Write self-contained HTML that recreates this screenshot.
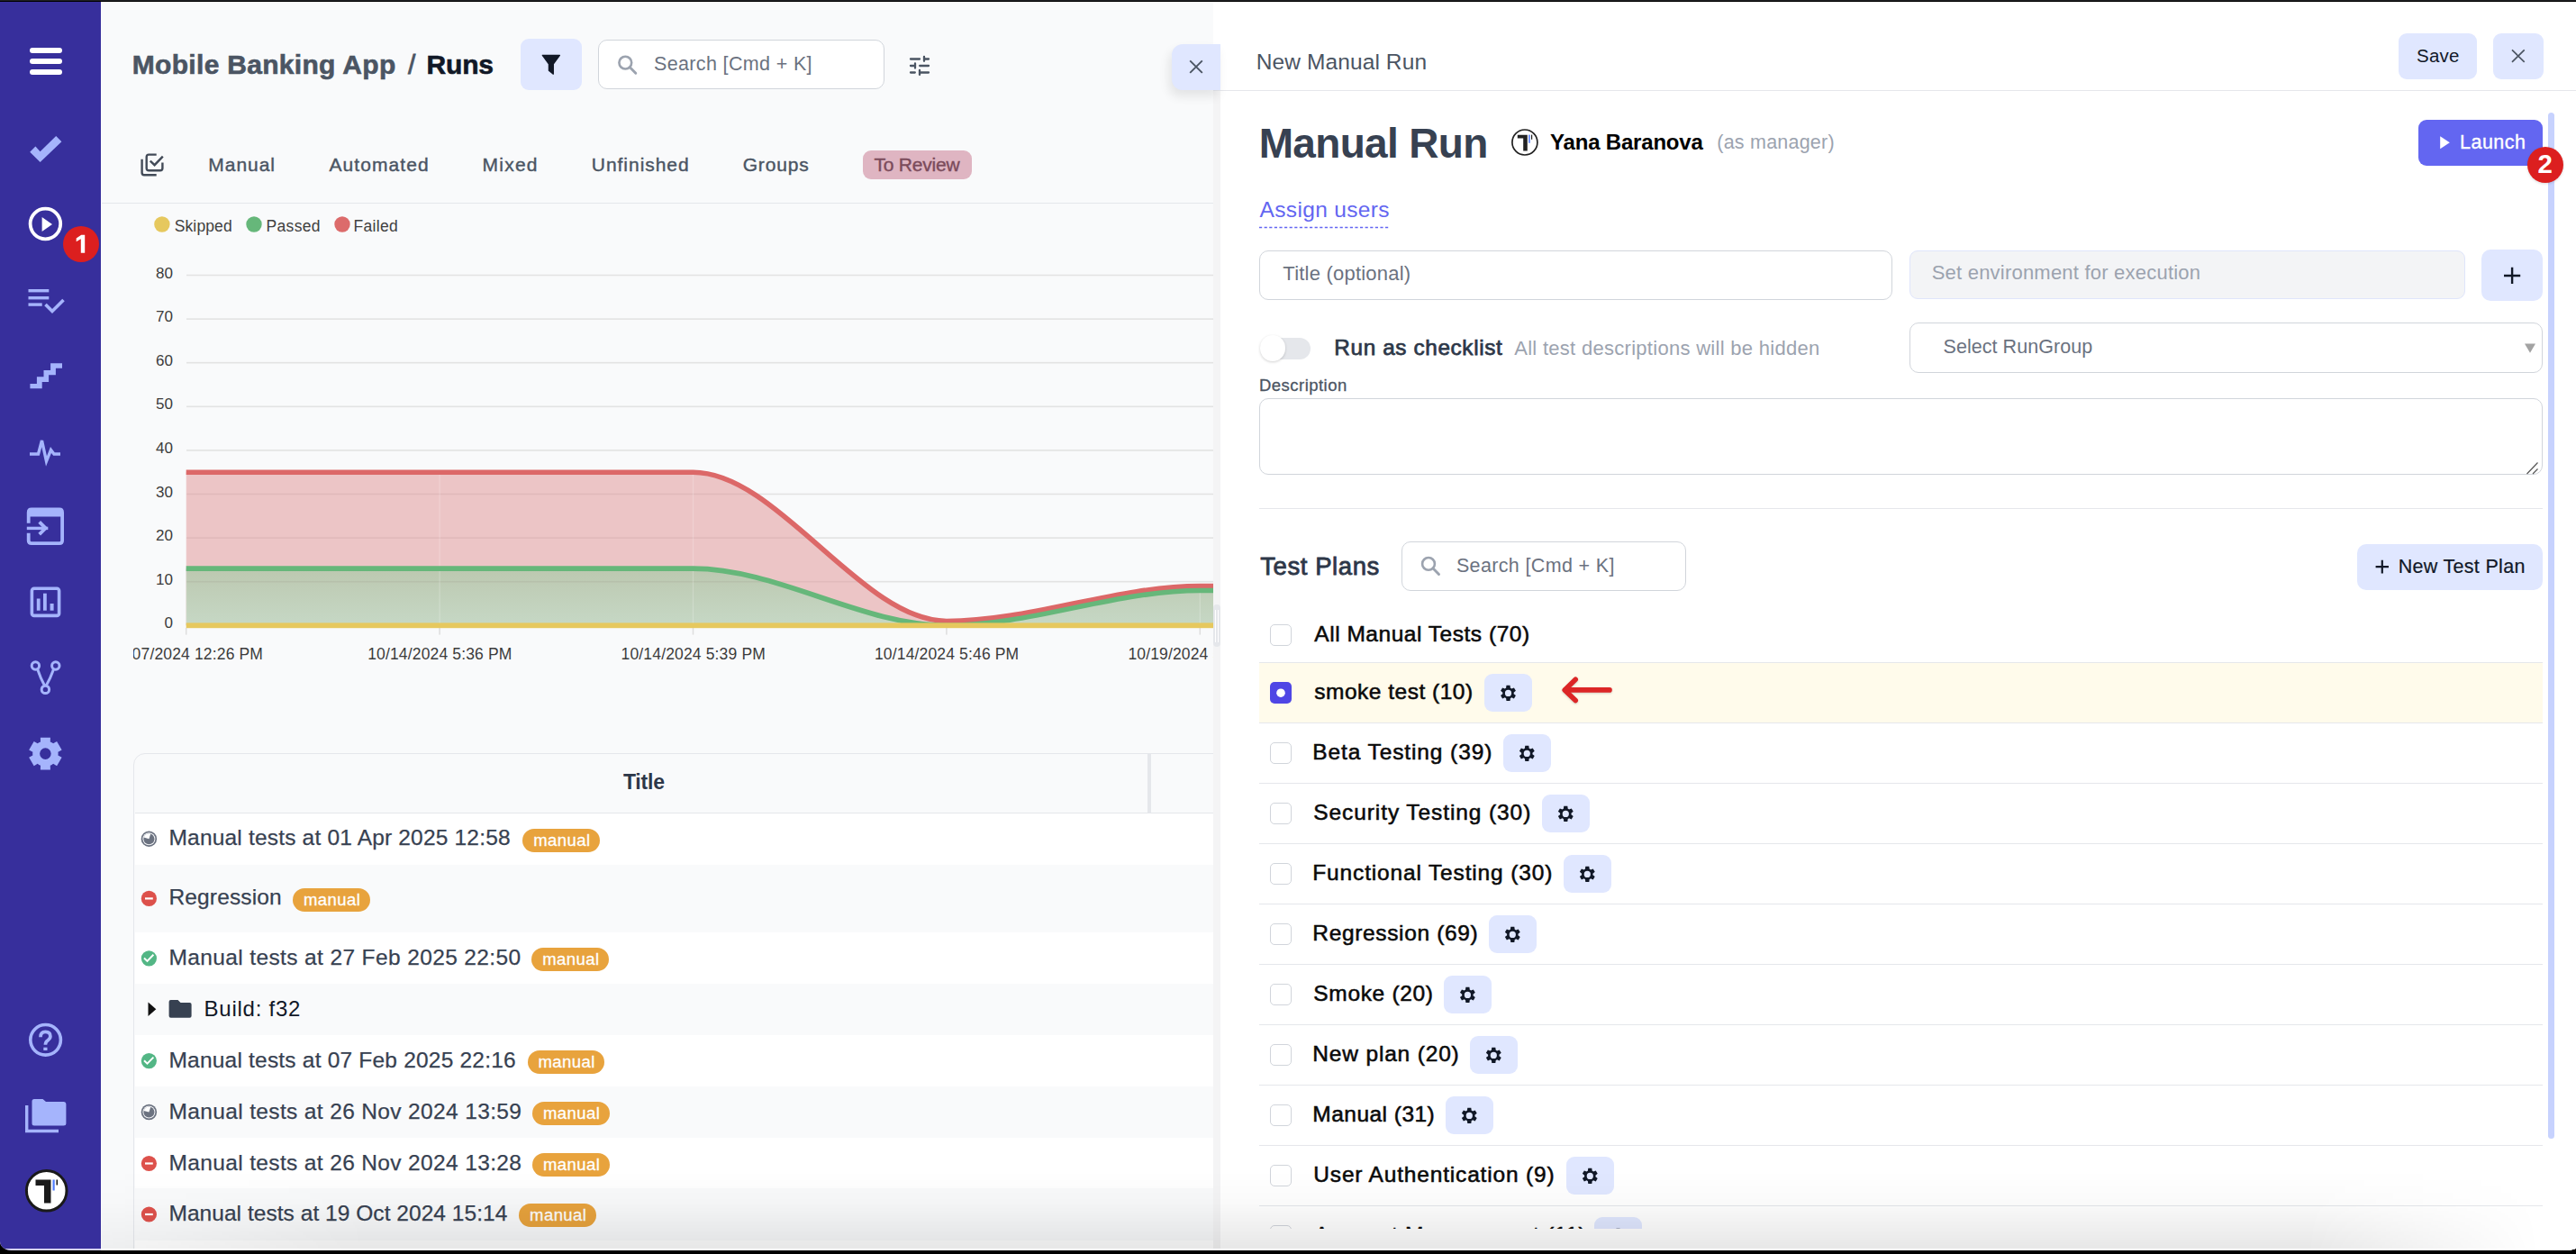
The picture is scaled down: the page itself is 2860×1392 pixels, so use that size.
<!DOCTYPE html><html><head><meta charset="utf-8"><style>
html,body{margin:0;padding:0;}
body{width:2860px;height:1392px;overflow:hidden;background:#000;position:relative;font-family:"Liberation Sans",sans-serif;}
.t{position:absolute;line-height:1;white-space:nowrap;}
#win{position:absolute;left:0;top:2px;width:2860px;height:1386px;overflow:hidden;border-radius:0 0 12px 12px / 0 0 3px 10px;background:#f9fafb;}
#root{position:absolute;left:0;top:-2px;width:2860px;height:1392px;}
#main{position:absolute;left:0;top:0;width:1347px;height:1392px;overflow:hidden;}
#panel{position:absolute;left:1347px;top:0;width:1513px;height:1392px;overflow:hidden;background:#fff;}
#pin{position:absolute;left:-1347px;top:0;width:2860px;height:1392px;}
</style></head><body><div id="win"><div id="root">
<div style="position:absolute;left:112.00px;top:2.00px;width:1235.00px;height:1.00px;box-sizing:border-box;background:#fff;"></div>
<div id="main">
<div class="t" style="left:146.80px;top:56.61px;font-size:30px;color:#4b5563;font-weight:700;letter-spacing:0.306px;-webkit-text-stroke:0.60px #4b5563;">Mobile Banking App</div>
<div class="t" style="left:453.00px;top:56.61px;font-size:30px;color:#4b5563;font-weight:400;letter-spacing:0.000px;-webkit-text-stroke:0.80px #4b5563;">/</div>
<div class="t" style="left:473.50px;top:56.61px;font-size:30px;color:#111827;font-weight:700;letter-spacing:-0.172px;-webkit-text-stroke:0.60px #111827;">Runs</div>
<div style="position:absolute;left:578.00px;top:43.00px;width:68.00px;height:56.50px;box-sizing:border-box;background:#e0e7ff;border-radius:9px;"></div>
<svg style="position:absolute;left:0;top:0;overflow:visible" width="2860" height="1392" viewBox="0 0 2860 1392"><path d="M602.3,61.3 H621.4 L614.3,71 V82.2 L609.4,78.3 V71 Z" fill="#111827" stroke="#111827" stroke-width="1.3" stroke-linejoin="round"/></svg>
<div style="position:absolute;left:664.00px;top:44.20px;width:317.60px;height:55.10px;box-sizing:border-box;background:#fff;border:1.5px solid #d1d5db;border-radius:10px;"></div>
<svg style="position:absolute;left:0;top:0;overflow:visible" width="2860" height="1392" viewBox="0 0 2860 1392"><circle cx="694.3" cy="69.6" r="6.9" fill="none" stroke="#9ca3af" stroke-width="2.6"/><line x1="699.4" y1="74.7" x2="705.8" y2="81.2" stroke="#9ca3af" stroke-width="2.9" stroke-linecap="round"/></svg>
<div class="t" style="left:726.00px;top:60.80px;font-size:21.5px;color:#6b7280;font-weight:400;letter-spacing:0.353px;">Search [Cmd + K]</div>
<svg style="position:absolute;left:0;top:0;overflow:visible" width="2860" height="1392" viewBox="0 0 2860 1392"><g stroke="#4b5563" stroke-width="2.3" stroke-linecap="round" fill="none"><path d="M1011,65.5 H1021 M1027.2,65.5 H1031 M1026,63 V67.8 M1011,73 H1014.2 M1021.2,73 H1031 M1016,70.4 V75.6 M1011,80.5 H1015.8 M1022.8,80.5 H1031 M1021,78 V82.9"/></g></svg>
<svg style="position:absolute;left:0;top:0;overflow:visible" width="2860" height="1392" viewBox="0 0 2860 1392"><g fill="none" stroke="#434b58" stroke-width="2.4"><path d="M157.6,176.7 V191.8 Q157.6,194.2 160,194.2 H173.7"/><path d="M173.7,171.6 H165.2 Q162.7,171.6 162.7,174.2 V186.7 Q162.7,189.2 165.2,189.2 H177.9 Q180.4,189.2 180.4,186.7 V180.4"/><path d="M166.8,178.6 L171.6,183.2 L180.8,173.6"/></g></svg>
<div class="t" style="left:231.30px;top:172.22px;font-size:21px;color:#4b5563;font-weight:400;letter-spacing:0.958px;-webkit-text-stroke:0.40px #4b5563;">Manual</div>
<div class="t" style="left:365.40px;top:172.22px;font-size:21px;color:#4b5563;font-weight:400;letter-spacing:1.102px;-webkit-text-stroke:0.40px #4b5563;">Automated</div>
<div class="t" style="left:535.60px;top:172.22px;font-size:21px;color:#4b5563;font-weight:400;letter-spacing:1.216px;-webkit-text-stroke:0.40px #4b5563;">Mixed</div>
<div class="t" style="left:656.80px;top:172.22px;font-size:21px;color:#4b5563;font-weight:400;letter-spacing:0.961px;-webkit-text-stroke:0.40px #4b5563;">Unfinished</div>
<div class="t" style="left:824.70px;top:172.22px;font-size:21px;color:#4b5563;font-weight:400;letter-spacing:0.827px;-webkit-text-stroke:0.40px #4b5563;">Groups</div>
<div style="position:absolute;left:958.00px;top:167.20px;width:121.00px;height:31.40px;box-sizing:border-box;background:#dfb5c2;border-radius:9px;"></div>
<div class="t" style="left:970.40px;top:172.22px;font-size:21px;color:#7b4b5b;font-weight:400;letter-spacing:-0.213px;-webkit-text-stroke:0.40px #7b4b5b;">To Review</div>
<div style="position:absolute;left:112.00px;top:224.60px;width:1235.00px;height:1.50px;box-sizing:border-box;background:#e5e7eb;"></div>
<svg style="position:absolute;left:0;top:0;overflow:visible" width="2860" height="1392" viewBox="0 0 2860 1392"><defs><clipPath id="cc"><rect x="148" y="230" width="1199" height="520"/></clipPath><linearGradient id="gg" x1="0" y1="631" x2="0" y2="694" gradientUnits="userSpaceOnUse"><stop offset="0" stop-color="#bcc8b0"/><stop offset="1" stop-color="#c6d8c5"/></linearGradient></defs><circle cx="179.9" cy="249" r="8.7" fill="#e6c85e"/><circle cx="282" cy="249" r="8.7" fill="#66b77a"/><circle cx="380" cy="249" r="8.7" fill="#dc6b6b"/><rect x="207" y="304.7" width="1140" height="1.6" fill="#e3e3e3"/><rect x="207" y="353.3" width="1140" height="1.6" fill="#e3e3e3"/><rect x="207" y="401.9" width="1140" height="1.6" fill="#e3e3e3"/><rect x="207" y="450.5" width="1140" height="1.6" fill="#e3e3e3"/><rect x="207" y="499.1" width="1140" height="1.6" fill="#e3e3e3"/><rect x="207" y="547.7" width="1140" height="1.6" fill="#e3e3e3"/><rect x="207" y="596.3" width="1140" height="1.6" fill="#e3e3e3"/><rect x="207" y="644.9" width="1140" height="1.6" fill="#e3e3e3"/><rect x="207" y="693.5" width="1140" height="1.6" fill="#e3e3e3"/><rect x="205.95" y="697" width="1.5" height="7.6" fill="#dedede"/><rect x="487.35" y="697" width="1.5" height="7.6" fill="#dedede"/><rect x="768.75" y="697" width="1.5" height="7.6" fill="#dedede"/><rect x="1050.15" y="697" width="1.5" height="7.6" fill="#dedede"/><rect x="1331.55" y="697" width="1.5" height="7.6" fill="#dedede"/><g clip-path="url(#cc)"><path d="M206.70,524.27 C300.50,524.27 394.30,524.27 488.10,524.27 C581.90,524.27 675.70,524.27 769.50,524.27 C863.30,524.27 957.10,689.44 1050.90,689.44 C1144.70,689.44 1238.50,650.58 1332.30,650.58 C1426.10,650.58 1519.90,650.58 1613.70,650.58 L1613.7,694.3 L206.7,694.3 Z" fill="#ecc5c6"/><path d="M206.70,631.15 C300.50,631.15 394.30,631.15 488.10,631.15 C581.90,631.15 675.70,631.15 769.50,631.15 C863.30,631.15 957.10,694.30 1050.90,694.30 C1144.70,694.30 1238.50,655.44 1332.30,655.44 C1426.10,655.44 1519.90,655.44 1613.70,655.44 L1613.7,694.3 L206.7,694.3 Z" fill="url(#gg)"/><clipPath id="fc"><path d="M206.70,524.27 C300.50,524.27 394.30,524.27 488.10,524.27 C581.90,524.27 675.70,524.27 769.50,524.27 C863.30,524.27 957.10,689.44 1050.90,689.44 C1144.70,689.44 1238.50,650.58 1332.30,650.58 C1426.10,650.58 1519.90,650.58 1613.70,650.58 L1613.7,694.3 L206.7,694.3 Z"/></clipPath><g clip-path="url(#fc)"><rect x="207" y="304.7" width="1140" height="1.6" fill="rgba(90,40,40,0.07)"/><rect x="207" y="353.3" width="1140" height="1.6" fill="rgba(90,40,40,0.07)"/><rect x="207" y="401.9" width="1140" height="1.6" fill="rgba(90,40,40,0.07)"/><rect x="207" y="450.5" width="1140" height="1.6" fill="rgba(90,40,40,0.07)"/><rect x="207" y="499.1" width="1140" height="1.6" fill="rgba(90,40,40,0.07)"/><rect x="207" y="547.7" width="1140" height="1.6" fill="rgba(90,40,40,0.07)"/><rect x="207" y="596.3" width="1140" height="1.6" fill="rgba(90,40,40,0.07)"/><rect x="207" y="644.9" width="1140" height="1.6" fill="rgba(90,40,40,0.07)"/><rect x="207" y="693.5" width="1140" height="1.6" fill="rgba(90,40,40,0.07)"/><rect x="206.10" y="300" width="1.2" height="394" fill="rgba(255,255,255,0.22)"/><rect x="487.50" y="300" width="1.2" height="394" fill="rgba(255,255,255,0.22)"/><rect x="768.90" y="300" width="1.2" height="394" fill="rgba(255,255,255,0.22)"/><rect x="1050.30" y="300" width="1.2" height="394" fill="rgba(255,255,255,0.22)"/><rect x="1331.70" y="300" width="1.2" height="394" fill="rgba(255,255,255,0.22)"/></g><path d="M206.70,524.27 C300.50,524.27 394.30,524.27 488.10,524.27 C581.90,524.27 675.70,524.27 769.50,524.27 C863.30,524.27 957.10,689.44 1050.90,689.44 C1144.70,689.44 1238.50,650.58 1332.30,650.58 C1426.10,650.58 1519.90,650.58 1613.70,650.58" fill="none" stroke="#dc6868" stroke-width="5.6"/><path d="M206.70,631.15 C300.50,631.15 394.30,631.15 488.10,631.15 C581.90,631.15 675.70,631.15 769.50,631.15 C863.30,631.15 957.10,694.30 1050.90,694.30 C1144.70,694.30 1238.50,655.44 1332.30,655.44 C1426.10,655.44 1519.90,655.44 1613.70,655.44" fill="none" stroke="#66b77a" stroke-width="5.6"/><rect x="206.7" y="691.40" width="1200" height="5.8" fill="#e6c85e"/></g></svg>
<div class="t" style="left:193.70px;top:243.39px;font-size:17.5px;color:#404040;font-weight:400;letter-spacing:0.132px;">Skipped</div>
<div class="t" style="left:295.50px;top:243.39px;font-size:17.5px;color:#404040;font-weight:400;letter-spacing:0.332px;">Passed</div>
<div class="t" style="left:392.60px;top:243.39px;font-size:17.5px;color:#404040;font-weight:400;letter-spacing:0.294px;">Failed</div>
<div class="t" style="left:172.95px;top:294.61px;font-size:17px;color:#3c3c3c;font-weight:400;letter-spacing:0.000px;">80</div>
<div class="t" style="left:172.95px;top:343.21px;font-size:17px;color:#3c3c3c;font-weight:400;letter-spacing:0.000px;">70</div>
<div class="t" style="left:172.95px;top:391.81px;font-size:17px;color:#3c3c3c;font-weight:400;letter-spacing:0.000px;">60</div>
<div class="t" style="left:172.95px;top:440.41px;font-size:17px;color:#3c3c3c;font-weight:400;letter-spacing:0.000px;">50</div>
<div class="t" style="left:172.95px;top:489.01px;font-size:17px;color:#3c3c3c;font-weight:400;letter-spacing:0.000px;">40</div>
<div class="t" style="left:172.95px;top:537.61px;font-size:17px;color:#3c3c3c;font-weight:400;letter-spacing:0.000px;">30</div>
<div class="t" style="left:172.95px;top:586.21px;font-size:17px;color:#3c3c3c;font-weight:400;letter-spacing:0.000px;">20</div>
<div class="t" style="left:172.95px;top:634.81px;font-size:17px;color:#3c3c3c;font-weight:400;letter-spacing:0.000px;">10</div>
<div class="t" style="left:182.40px;top:683.41px;font-size:17px;color:#3c3c3c;font-weight:400;letter-spacing:0.000px;">0</div>
<div style="position:absolute;left:148px;top:700px;width:1199px;height:50px;overflow:hidden;">
<div style="position:absolute;left:-148px;top:-700px;width:1400px;height:800px;">
<div class="t" style="left:121.84px;top:717.79px;font-size:17.5px;color:#3c3c3c;font-weight:400;letter-spacing:0.153px;">10/07/2024 12:26 PM</div>
<div class="t" style="left:408.18px;top:717.79px;font-size:17.5px;color:#3c3c3c;font-weight:400;letter-spacing:0.153px;">10/14/2024 5:36 PM</div>
<div class="t" style="left:689.58px;top:717.79px;font-size:17.5px;color:#3c3c3c;font-weight:400;letter-spacing:0.153px;">10/14/2024 5:39 PM</div>
<div class="t" style="left:970.98px;top:717.79px;font-size:17.5px;color:#3c3c3c;font-weight:400;letter-spacing:0.153px;">10/14/2024 5:46 PM</div>
<div class="t" style="left:1252.38px;top:717.79px;font-size:17.5px;color:#3c3c3c;font-weight:400;letter-spacing:0.153px;">10/19/2024 5:25 PM</div>
</div></div>
<div style="position:absolute;left:148.40px;top:835.60px;width:1271.60px;height:664.40px;box-sizing:border-box;border:1.5px solid #e5e7eb;border-radius:13px 0 0 0;background:#f9fafb;"></div>
<div style="position:absolute;left:1273.70px;top:836.50px;width:4.80px;height:65.50px;box-sizing:border-box;background:#e5e7eb;"></div>
<div class="t" style="left:691.90px;top:857.13px;font-size:23px;color:#2d3748;font-weight:700;letter-spacing:-0.193px;">Title</div>
<div style="position:absolute;left:150.00px;top:903.00px;width:1197.00px;height:57.00px;box-sizing:border-box;background:#ffffff;"></div>
<div style="position:absolute;left:150.00px;top:960.00px;width:1197.00px;height:75.00px;box-sizing:border-box;background:#f9fafb;"></div>
<div style="position:absolute;left:150.00px;top:1035.00px;width:1197.00px;height:56.60px;box-sizing:border-box;background:#ffffff;"></div>
<div style="position:absolute;left:150.00px;top:1091.60px;width:1197.00px;height:57.40px;box-sizing:border-box;background:#f9fafb;"></div>
<div style="position:absolute;left:150.00px;top:1149.00px;width:1197.00px;height:56.70px;box-sizing:border-box;background:#ffffff;"></div>
<div style="position:absolute;left:150.00px;top:1205.70px;width:1197.00px;height:56.90px;box-sizing:border-box;background:#f9fafb;"></div>
<div style="position:absolute;left:150.00px;top:1262.60px;width:1197.00px;height:56.90px;box-sizing:border-box;background:#ffffff;"></div>
<div style="position:absolute;left:150.00px;top:1319.50px;width:1197.00px;height:57.20px;box-sizing:border-box;background:#f9fafb;"></div>
<div style="position:absolute;left:150.00px;top:1376.70px;width:1197.00px;height:57.30px;box-sizing:border-box;background:#ffffff;"></div>
<div style="position:absolute;left:149.90px;top:901.50px;width:1197.10px;height:1.00px;box-sizing:border-box;background:#e5e7eb;"></div>
<svg style="position:absolute;left:0;top:0;overflow:visible" width="2860" height="1392" viewBox="0 0 2860 1392"><circle cx="165.4" cy="931.2" r="8.7" fill="#6b7280"/><circle cx="165.4" cy="931.2" r="7.0" fill="#f3f4f6"/><circle cx="165.4" cy="931.2" r="6.0" fill="#6b7280"/><path d="M165.4,931.2 L159.6,929.6 A6,6 0 0 1 167.3,925.5 Z" fill="#fff"/><circle cx="165.4" cy="997.4" r="8.6" fill="#dd514b"/><rect x="161.0" y="996.3" width="8.8" height="2.2" fill="#fff"/><circle cx="165.4" cy="1063.8" r="8.6" fill="#53b685"/><path d="M160.0,1063.5 L163.5,1066.8999999999999 L170.4,1059.8" fill="none" stroke="#fff" stroke-width="2"/><circle cx="165.4" cy="1177.6" r="8.6" fill="#53b685"/><path d="M160.0,1177.3 L163.5,1180.6999999999998 L170.4,1173.6" fill="none" stroke="#fff" stroke-width="2"/><circle cx="165.4" cy="1234.5" r="8.7" fill="#6b7280"/><circle cx="165.4" cy="1234.5" r="7.0" fill="#f3f4f6"/><circle cx="165.4" cy="1234.5" r="6.0" fill="#6b7280"/><path d="M165.4,1234.5 L159.6,1232.9 A6,6 0 0 1 167.3,1228.8 Z" fill="#fff"/><circle cx="165.4" cy="1291.5" r="8.6" fill="#dd514b"/><rect x="161.0" y="1290.4" width="8.8" height="2.2" fill="#fff"/><circle cx="165.4" cy="1348" r="8.6" fill="#dd514b"/><rect x="161.0" y="1346.9" width="8.8" height="2.2" fill="#fff"/></svg>
<div class="t" style="left:187.50px;top:918.26px;font-size:24.5px;color:#374151;font-weight:400;letter-spacing:0.183px;-webkit-text-stroke:0.25px #374151;">Manual tests at 01 Apr 2025 12:58</div>
<div style="position:absolute;left:580.00px;top:919.50px;width:86.00px;height:26.20px;box-sizing:border-box;background:#e8a33d;border-radius:13px;"></div>
<div class="t" style="left:592.20px;top:923.54px;font-size:18.5px;color:#ffffff;font-weight:400;letter-spacing:0.427px;-webkit-text-stroke:0.30px #ffffff;">manual</div>
<div class="t" style="left:187.50px;top:984.46px;font-size:24.5px;color:#374151;font-weight:400;letter-spacing:0.134px;-webkit-text-stroke:0.25px #374151;">Regression</div>
<div style="position:absolute;left:324.80px;top:985.70px;width:85.90px;height:26.20px;box-sizing:border-box;background:#e8a33d;border-radius:13px;"></div>
<div class="t" style="left:336.95px;top:989.74px;font-size:18.5px;color:#ffffff;font-weight:400;letter-spacing:0.427px;-webkit-text-stroke:0.30px #ffffff;">manual</div>
<div class="t" style="left:187.50px;top:1050.86px;font-size:24.5px;color:#374151;font-weight:400;letter-spacing:0.374px;-webkit-text-stroke:0.25px #374151;">Manual tests at 27 Feb 2025 22:50</div>
<div style="position:absolute;left:590.30px;top:1052.10px;width:85.50px;height:26.20px;box-sizing:border-box;background:#e8a33d;border-radius:13px;"></div>
<div class="t" style="left:602.25px;top:1056.14px;font-size:18.5px;color:#ffffff;font-weight:400;letter-spacing:0.427px;-webkit-text-stroke:0.30px #ffffff;">manual</div>
<div class="t" style="left:187.50px;top:1164.66px;font-size:24.5px;color:#374151;font-weight:400;letter-spacing:0.202px;-webkit-text-stroke:0.25px #374151;">Manual tests at 07 Feb 2025 22:16</div>
<div style="position:absolute;left:586.00px;top:1165.90px;width:84.50px;height:26.20px;box-sizing:border-box;background:#e8a33d;border-radius:13px;"></div>
<div class="t" style="left:597.45px;top:1169.94px;font-size:18.5px;color:#ffffff;font-weight:400;letter-spacing:0.427px;-webkit-text-stroke:0.30px #ffffff;">manual</div>
<div class="t" style="left:187.50px;top:1221.56px;font-size:24.5px;color:#374151;font-weight:400;letter-spacing:0.357px;-webkit-text-stroke:0.25px #374151;">Manual tests at 26 Nov 2024 13:59</div>
<div style="position:absolute;left:590.80px;top:1222.80px;width:86.00px;height:26.20px;box-sizing:border-box;background:#e8a33d;border-radius:13px;"></div>
<div class="t" style="left:603.00px;top:1226.84px;font-size:18.5px;color:#ffffff;font-weight:400;letter-spacing:0.427px;-webkit-text-stroke:0.30px #ffffff;">manual</div>
<div class="t" style="left:187.50px;top:1278.56px;font-size:24.5px;color:#374151;font-weight:400;letter-spacing:0.357px;-webkit-text-stroke:0.25px #374151;">Manual tests at 26 Nov 2024 13:28</div>
<div style="position:absolute;left:590.80px;top:1279.80px;width:86.00px;height:26.20px;box-sizing:border-box;background:#e8a33d;border-radius:13px;"></div>
<div class="t" style="left:603.00px;top:1283.84px;font-size:18.5px;color:#ffffff;font-weight:400;letter-spacing:0.427px;-webkit-text-stroke:0.30px #ffffff;">manual</div>
<div class="t" style="left:187.50px;top:1335.06px;font-size:24.5px;color:#374151;font-weight:400;letter-spacing:0.040px;-webkit-text-stroke:0.25px #374151;">Manual tests at 19 Oct 2024 15:14</div>
<div style="position:absolute;left:576.00px;top:1336.30px;width:85.80px;height:26.20px;box-sizing:border-box;background:#e8a33d;border-radius:13px;"></div>
<div class="t" style="left:588.10px;top:1340.34px;font-size:18.5px;color:#ffffff;font-weight:400;letter-spacing:0.427px;-webkit-text-stroke:0.30px #ffffff;">manual</div>
<svg style="position:absolute;left:0;top:0;overflow:visible" width="2860" height="1392" viewBox="0 0 2860 1392"><path d="M164.5,1112.5 L173.3,1120.2 L164.5,1128 Z" fill="#111"/><path d="M187.6,1112 Q187.6,1110 189.6,1110 H197.5 L200.5,1113 H210.6 Q212.6,1113 212.6,1115 V1127.7 Q212.6,1129.7 210.6,1129.7 H189.6 Q187.6,1129.7 187.6,1127.7 Z" fill="#374151"/></svg>
<div class="t" style="left:226.60px;top:1107.68px;font-size:24px;color:#111827;font-weight:400;letter-spacing:0.742px;">Build: f32</div>
</div>
<div id="panel"><div id="pin">
<div style="position:absolute;left:1355.00px;top:0.00px;width:1505.00px;height:1392.00px;box-sizing:border-box;background:#fff;"></div>
<div class="t" style="left:1394.70px;top:57.46px;font-size:24.5px;color:#4b5563;font-weight:400;letter-spacing:0.108px;">New Manual Run</div>
<div style="position:absolute;left:2663.00px;top:37.00px;width:87.00px;height:51.00px;box-sizing:border-box;background:#e0e7ff;border-radius:9px;"></div>
<div class="t" style="left:2683.00px;top:52.45px;font-size:20.5px;color:#111827;font-weight:400;letter-spacing:0.225px;">Save</div>
<div style="position:absolute;left:2768.00px;top:37.00px;width:56.00px;height:51.00px;box-sizing:border-box;background:#e0e7ff;border-radius:9px;"></div>
<svg style="position:absolute;left:0;top:0;overflow:visible" width="2860" height="1392" viewBox="0 0 2860 1392"><path d="M2789,55.4 L2802.7,68.9 M2802.7,55.4 L2789,68.9" stroke="#4b5563" stroke-width="1.7"/></svg>
<div style="position:absolute;left:1347.00px;top:99.60px;width:1513.00px;height:1.40px;box-sizing:border-box;background:#e5e7eb;"></div>
<div class="t" style="left:1397.70px;top:136.16px;font-size:46px;color:#374151;font-weight:700;letter-spacing:-0.673px;">Manual Run</div>
<svg style="position:absolute;left:0;top:0;overflow:visible" width="2860" height="1392" viewBox="0 0 2860 1392"><circle cx="1692.9" cy="158" r="14" fill="#fff" stroke="#222" stroke-width="1.7"/><path d="M1684.8,149.8 H1695.8 V167.6 H1691.2 V153.6 H1684.8 Z" fill="#222"/><rect x="1697.1" y="149.6" width="1.7" height="9.2" fill="#5f86ff"/><rect x="1700" y="149.6" width="1.2" height="5.2" fill="#222"/></svg>
<div class="t" style="left:1721.00px;top:145.78px;font-size:24px;color:#000000;font-weight:700;letter-spacing:-0.187px;">Yana Baranova</div>
<div class="t" style="left:1906.30px;top:147.90px;font-size:21.5px;color:#9ca3af;font-weight:400;letter-spacing:0.219px;">(as manager)</div>
<div style="position:absolute;left:2685.00px;top:133.00px;width:138.00px;height:51.00px;box-sizing:border-box;background:#6366f1;border-radius:9px;"></div>
<svg style="position:absolute;left:0;top:0;overflow:visible" width="2860" height="1392" viewBox="0 0 2860 1392"><path d="M2709.2,151.2 L2719.8,158.2 L2709.2,165.2 Z" fill="#fff"/></svg>
<div class="t" style="left:2731.00px;top:147.80px;font-size:21.5px;color:#ffffff;font-weight:400;letter-spacing:0.484px;-webkit-text-stroke:0.35px #ffffff;">Launch</div>
<div style="position:absolute;left:2829.20px;top:125.30px;width:6.80px;height:1138.70px;box-sizing:border-box;background:#c7d2fe;border-radius:4px;"></div>
<div style="position:absolute;left:2806px;top:162.7px;width:40px;height:40px;border-radius:50%;background:#dc1f1f;box-shadow:0 1px 3px rgba(0,0,0,0.15);"></div>
<div class="t" style="left:2817.50px;top:167.13px;font-size:29.5px;color:#ffffff;font-weight:700;letter-spacing:0.000px;">2</div>
<div class="t" style="left:1398.60px;top:221.16px;font-size:24.5px;color:#6366f1;font-weight:400;letter-spacing:0.336px;">Assign users</div>
<svg style="position:absolute;left:0;top:0;overflow:visible" width="2860" height="1392" viewBox="0 0 2860 1392"><line x1="1398" y1="252.5" x2="1543" y2="252.5" stroke="#6366f1" stroke-width="1.5" stroke-dasharray="3.2 2.4"/></svg>
<div style="position:absolute;left:1398.20px;top:277.50px;width:703.30px;height:55.00px;box-sizing:border-box;border:1.5px solid #d1d5db;border-radius:10px;background:#fff;"></div>
<div class="t" style="left:1424.30px;top:293.38px;font-size:22px;color:#6b7280;font-weight:400;letter-spacing:0.217px;">Title (optional)</div>
<div style="position:absolute;left:2120.20px;top:278.20px;width:616.80px;height:54.30px;box-sizing:border-box;border:1.5px solid #dfe5fb;border-radius:9px;background:#f3f4f6;"></div>
<div class="t" style="left:2144.70px;top:292.38px;font-size:22px;color:#9ca3af;font-weight:400;letter-spacing:0.216px;">Set environment for execution</div>
<div style="position:absolute;left:2755.00px;top:277.20px;width:67.70px;height:56.40px;box-sizing:border-box;background:#e0e7ff;border-radius:10px;"></div>
<svg style="position:absolute;left:0;top:0;overflow:visible" width="2860" height="1392" viewBox="0 0 2860 1392"><path d="M2780,306 H2798.2 M2789.1,296.8 V315.1" stroke="#111827" stroke-width="2.4"/></svg>
<div style="position:absolute;left:1398.60px;top:374.90px;width:56.40px;height:23.80px;box-sizing:border-box;background:#e5e7eb;border-radius:12px;"></div>
<div style="position:absolute;left:1398.7px;top:372.3px;width:28.6px;height:28.6px;border-radius:50%;background:#fff;box-shadow:0 1px 3px rgba(0,0,0,0.18);"></div>
<div class="t" style="left:1481.30px;top:374.43px;font-size:24.3px;color:#2d3748;font-weight:400;letter-spacing:0.637px;-webkit-text-stroke:0.75px #2d3748;">Run as checklist</div>
<div class="t" style="left:1681.20px;top:376.38px;font-size:22px;color:#9ca3af;font-weight:400;letter-spacing:0.288px;">All test descriptions will be hidden</div>
<div style="position:absolute;left:2120.20px;top:358.30px;width:702.50px;height:56.20px;box-sizing:border-box;border:1.5px solid #d1d5db;border-radius:10px;background:#fff;"></div>
<div class="t" style="left:2157.50px;top:375.00px;font-size:21.5px;color:#6b7280;font-weight:400;letter-spacing:0.052px;">Select RunGroup</div>
<svg style="position:absolute;left:0;top:0;overflow:visible" width="2860" height="1392" viewBox="0 0 2860 1392"><path d="M2803,381.6 H2815 L2809,391.7 Z" fill="#a3a3a3"/></svg>
<div class="t" style="left:1398.00px;top:419.04px;font-size:18.5px;color:#4b5563;font-weight:400;letter-spacing:0.465px;-webkit-text-stroke:0.30px #4b5563;">Description</div>
<div style="position:absolute;left:1398.30px;top:442.40px;width:1424.40px;height:85.10px;box-sizing:border-box;border:1.5px solid #d1d5db;border-radius:10px;background:#fff;"></div>
<svg style="position:absolute;left:0;top:0;overflow:visible" width="2860" height="1392" viewBox="0 0 2860 1392"><path d="M2805.5,526 L2817.5,513.5 M2812,526 L2817.5,520.5" stroke="#555" stroke-width="1.2"/></svg>
<div style="position:absolute;left:1398.00px;top:563.90px;width:1425.00px;height:1.50px;box-sizing:border-box;background:#e5e7eb;"></div>
<div class="t" style="left:1399.30px;top:615.12px;font-size:27.5px;color:#2d3748;font-weight:400;letter-spacing:0.565px;-webkit-text-stroke:0.80px #2d3748;">Test Plans</div>
<div style="position:absolute;left:1555.50px;top:601.00px;width:316.50px;height:55.30px;box-sizing:border-box;border:1.5px solid #d1d5db;border-radius:10px;background:#fff;"></div>
<svg style="position:absolute;left:0;top:0;overflow:visible" width="2860" height="1392" viewBox="0 0 2860 1392"><circle cx="1586" cy="625.9" r="6.9" fill="none" stroke="#9ca3af" stroke-width="2.6"/><line x1="1591.1" y1="631" x2="1597.5" y2="637.5" stroke="#9ca3af" stroke-width="2.9" stroke-linecap="round"/></svg>
<div class="t" style="left:1616.90px;top:617.60px;font-size:21.5px;color:#6b7280;font-weight:400;letter-spacing:0.353px;">Search [Cmd + K]</div>
<div style="position:absolute;left:2617.00px;top:604.00px;width:206.00px;height:51.00px;box-sizing:border-box;background:#e0e7ff;border-radius:10px;"></div>
<svg style="position:absolute;left:0;top:0;overflow:visible" width="2860" height="1392" viewBox="0 0 2860 1392"><path d="M2637.6,629.2 H2652 M2644.8,621.8 V636.6" stroke="#111827" stroke-width="2.2"/></svg>
<div class="t" style="left:2662.70px;top:618.80px;font-size:21.5px;color:#111827;font-weight:400;letter-spacing:0.303px;-webkit-text-stroke:0.20px #111827;">New Test Plan</div>
<div style="position:absolute;left:1398.00px;top:735.10px;width:1425.00px;height:67.60px;box-sizing:border-box;background:#fffbeb;"></div>
<div style="position:absolute;left:1398.00px;top:734.60px;width:1425.00px;height:1.00px;box-sizing:border-box;background:#e5e7eb;"></div>
<div style="position:absolute;left:1398.00px;top:801.60px;width:1425.00px;height:1.00px;box-sizing:border-box;background:#e5e7eb;"></div>
<div style="position:absolute;left:1398.00px;top:868.60px;width:1425.00px;height:1.00px;box-sizing:border-box;background:#e5e7eb;"></div>
<div style="position:absolute;left:1398.00px;top:935.60px;width:1425.00px;height:1.00px;box-sizing:border-box;background:#e5e7eb;"></div>
<div style="position:absolute;left:1398.00px;top:1002.60px;width:1425.00px;height:1.00px;box-sizing:border-box;background:#e5e7eb;"></div>
<div style="position:absolute;left:1398.00px;top:1069.60px;width:1425.00px;height:1.00px;box-sizing:border-box;background:#e5e7eb;"></div>
<div style="position:absolute;left:1398.00px;top:1136.60px;width:1425.00px;height:1.00px;box-sizing:border-box;background:#e5e7eb;"></div>
<div style="position:absolute;left:1398.00px;top:1203.60px;width:1425.00px;height:1.00px;box-sizing:border-box;background:#e5e7eb;"></div>
<div style="position:absolute;left:1398.00px;top:1270.60px;width:1425.00px;height:1.00px;box-sizing:border-box;background:#e5e7eb;"></div>
<div style="position:absolute;left:1398.00px;top:1337.60px;width:1425.00px;height:1.00px;box-sizing:border-box;background:#e5e7eb;"></div>
<div style="position:absolute;left:1347px;top:0;width:1513px;height:1363.6px;overflow:hidden;"><div style="position:absolute;left:-1347px;top:0;width:2860px;height:1392px;">
<div style="position:absolute;left:1410.30px;top:693.10px;width:23.50px;height:23.50px;box-sizing:border-box;border:1.5px solid #d1d5db;border-radius:5px;background:#fff;"></div>
<div class="t" style="left:1459.30px;top:692.26px;font-size:24.5px;color:#0a0a0a;font-weight:400;letter-spacing:0.525px;-webkit-text-stroke:0.55px #0a0a0a;">All Manual Tests (70)</div>
<div style="position:absolute;left:1410.30px;top:757.25px;width:23.50px;height:23.50px;box-sizing:border-box;background:#4f46e5;border-radius:5px;"></div>
<div class="t" style="left:1459.30px;top:756.41px;font-size:24.5px;color:#0a0a0a;font-weight:400;letter-spacing:0.495px;-webkit-text-stroke:0.55px #0a0a0a;">smoke test (10)</div>
<div style="position:absolute;left:1648.20px;top:748.00px;width:52.70px;height:42.00px;box-sizing:border-box;background:#e0e7ff;border-radius:9px;"></div>
<div style="position:absolute;left:1410.30px;top:824.25px;width:23.50px;height:23.50px;box-sizing:border-box;border:1.5px solid #d1d5db;border-radius:5px;background:#fff;"></div>
<div class="t" style="left:1457.30px;top:823.41px;font-size:24.5px;color:#0a0a0a;font-weight:400;letter-spacing:0.891px;-webkit-text-stroke:0.55px #0a0a0a;">Beta Testing (39)</div>
<div style="position:absolute;left:1669.00px;top:815.00px;width:52.70px;height:42.00px;box-sizing:border-box;background:#e0e7ff;border-radius:9px;"></div>
<div style="position:absolute;left:1410.30px;top:891.25px;width:23.50px;height:23.50px;box-sizing:border-box;border:1.5px solid #d1d5db;border-radius:5px;background:#fff;"></div>
<div class="t" style="left:1458.30px;top:890.41px;font-size:24.5px;color:#0a0a0a;font-weight:400;letter-spacing:0.907px;-webkit-text-stroke:0.55px #0a0a0a;">Security Testing (30)</div>
<div style="position:absolute;left:1712.00px;top:882.00px;width:52.70px;height:42.00px;box-sizing:border-box;background:#e0e7ff;border-radius:9px;"></div>
<div style="position:absolute;left:1410.30px;top:958.25px;width:23.50px;height:23.50px;box-sizing:border-box;border:1.5px solid #d1d5db;border-radius:5px;background:#fff;"></div>
<div class="t" style="left:1457.30px;top:957.41px;font-size:24.5px;color:#0a0a0a;font-weight:400;letter-spacing:0.846px;-webkit-text-stroke:0.55px #0a0a0a;">Functional Testing (30)</div>
<div style="position:absolute;left:1736.00px;top:949.00px;width:52.70px;height:42.00px;box-sizing:border-box;background:#e0e7ff;border-radius:9px;"></div>
<div style="position:absolute;left:1410.30px;top:1025.25px;width:23.50px;height:23.50px;box-sizing:border-box;border:1.5px solid #d1d5db;border-radius:5px;background:#fff;"></div>
<div class="t" style="left:1457.30px;top:1024.41px;font-size:24.5px;color:#0a0a0a;font-weight:400;letter-spacing:0.654px;-webkit-text-stroke:0.55px #0a0a0a;">Regression (69)</div>
<div style="position:absolute;left:1653.00px;top:1016.00px;width:52.70px;height:42.00px;box-sizing:border-box;background:#e0e7ff;border-radius:9px;"></div>
<div style="position:absolute;left:1410.30px;top:1092.25px;width:23.50px;height:23.50px;box-sizing:border-box;border:1.5px solid #d1d5db;border-radius:5px;background:#fff;"></div>
<div class="t" style="left:1458.30px;top:1091.41px;font-size:24.5px;color:#0a0a0a;font-weight:400;letter-spacing:0.670px;-webkit-text-stroke:0.55px #0a0a0a;">Smoke (20)</div>
<div style="position:absolute;left:1603.10px;top:1083.00px;width:52.70px;height:42.00px;box-sizing:border-box;background:#e0e7ff;border-radius:9px;"></div>
<div style="position:absolute;left:1410.30px;top:1159.25px;width:23.50px;height:23.50px;box-sizing:border-box;border:1.5px solid #d1d5db;border-radius:5px;background:#fff;"></div>
<div class="t" style="left:1457.30px;top:1158.41px;font-size:24.5px;color:#0a0a0a;font-weight:400;letter-spacing:0.829px;-webkit-text-stroke:0.55px #0a0a0a;">New plan (20)</div>
<div style="position:absolute;left:1632.00px;top:1150.00px;width:52.70px;height:42.00px;box-sizing:border-box;background:#e0e7ff;border-radius:9px;"></div>
<div style="position:absolute;left:1410.30px;top:1226.25px;width:23.50px;height:23.50px;box-sizing:border-box;border:1.5px solid #d1d5db;border-radius:5px;background:#fff;"></div>
<div class="t" style="left:1457.30px;top:1225.41px;font-size:24.5px;color:#0a0a0a;font-weight:400;letter-spacing:0.473px;-webkit-text-stroke:0.55px #0a0a0a;">Manual (31)</div>
<div style="position:absolute;left:1605.00px;top:1217.00px;width:52.70px;height:42.00px;box-sizing:border-box;background:#e0e7ff;border-radius:9px;"></div>
<div style="position:absolute;left:1410.30px;top:1293.25px;width:23.50px;height:23.50px;box-sizing:border-box;border:1.5px solid #d1d5db;border-radius:5px;background:#fff;"></div>
<div class="t" style="left:1458.30px;top:1292.41px;font-size:24.5px;color:#0a0a0a;font-weight:400;letter-spacing:0.823px;-webkit-text-stroke:0.55px #0a0a0a;">User Authentication (9)</div>
<div style="position:absolute;left:1739.00px;top:1284.00px;width:52.70px;height:42.00px;box-sizing:border-box;background:#e0e7ff;border-radius:9px;"></div>
<div style="position:absolute;left:1410.30px;top:1360.25px;width:23.50px;height:23.50px;box-sizing:border-box;border:1.5px solid #d1d5db;border-radius:5px;background:#fff;"></div>
<div class="t" style="left:1459.30px;top:1359.41px;font-size:24.5px;color:#0a0a0a;font-weight:400;letter-spacing:0.657px;-webkit-text-stroke:0.55px #0a0a0a;">Account Management (11)</div>
<div style="position:absolute;left:1770.20px;top:1351.00px;width:52.70px;height:42.00px;box-sizing:border-box;background:#e0e7ff;border-radius:9px;"></div>
<svg style="position:absolute;left:0;top:0;overflow:visible" width="2860" height="1392" viewBox="0 0 2860 1392"><circle cx="1422" cy="769.2" r="4.8" fill="#fff"/><path d="M1672.07,763.70 L1672.49,760.83 L1676.51,760.83 L1676.93,763.70 L1677.60,764.03 L1678.23,764.44 L1680.92,763.38 L1682.92,766.85 L1680.65,768.65 L1680.70,769.40 L1680.65,770.15 L1682.92,771.95 L1680.92,775.42 L1678.23,774.36 L1677.60,774.77 L1676.93,775.10 L1676.51,777.97 L1672.49,777.97 L1672.07,775.10 L1671.40,774.77 L1670.77,774.36 L1668.08,775.42 L1666.08,771.95 L1668.35,770.15 L1668.30,769.40 L1668.35,768.65 L1666.08,766.85 L1668.08,763.38 L1670.77,764.44 L1671.40,764.03Z M1678.10,769.40 A3.6,3.6 0 1 0 1670.90,769.40 A3.6,3.6 0 1 0 1678.10,769.40Z" fill="#111827" fill-rule="evenodd"/><path d="M1692.87,830.70 L1693.29,827.83 L1697.31,827.83 L1697.73,830.70 L1698.40,831.03 L1699.03,831.44 L1701.72,830.38 L1703.72,833.85 L1701.45,835.65 L1701.50,836.40 L1701.45,837.15 L1703.72,838.95 L1701.72,842.42 L1699.03,841.36 L1698.40,841.77 L1697.73,842.10 L1697.31,844.97 L1693.29,844.97 L1692.87,842.10 L1692.20,841.77 L1691.57,841.36 L1688.88,842.42 L1686.88,838.95 L1689.15,837.15 L1689.10,836.40 L1689.15,835.65 L1686.88,833.85 L1688.88,830.38 L1691.57,831.44 L1692.20,831.03Z M1698.90,836.40 A3.6,3.6 0 1 0 1691.70,836.40 A3.6,3.6 0 1 0 1698.90,836.40Z" fill="#111827" fill-rule="evenodd"/><path d="M1735.87,897.70 L1736.29,894.83 L1740.31,894.83 L1740.73,897.70 L1741.40,898.03 L1742.03,898.44 L1744.72,897.38 L1746.72,900.85 L1744.45,902.65 L1744.50,903.40 L1744.45,904.15 L1746.72,905.95 L1744.72,909.42 L1742.03,908.36 L1741.40,908.77 L1740.73,909.10 L1740.31,911.97 L1736.29,911.97 L1735.87,909.10 L1735.20,908.77 L1734.57,908.36 L1731.88,909.42 L1729.88,905.95 L1732.15,904.15 L1732.10,903.40 L1732.15,902.65 L1729.88,900.85 L1731.88,897.38 L1734.57,898.44 L1735.20,898.03Z M1741.90,903.40 A3.6,3.6 0 1 0 1734.70,903.40 A3.6,3.6 0 1 0 1741.90,903.40Z" fill="#111827" fill-rule="evenodd"/><path d="M1759.87,964.70 L1760.29,961.83 L1764.31,961.83 L1764.73,964.70 L1765.40,965.03 L1766.03,965.44 L1768.72,964.38 L1770.72,967.85 L1768.45,969.65 L1768.50,970.40 L1768.45,971.15 L1770.72,972.95 L1768.72,976.42 L1766.03,975.36 L1765.40,975.77 L1764.73,976.10 L1764.31,978.97 L1760.29,978.97 L1759.87,976.10 L1759.20,975.77 L1758.57,975.36 L1755.88,976.42 L1753.88,972.95 L1756.15,971.15 L1756.10,970.40 L1756.15,969.65 L1753.88,967.85 L1755.88,964.38 L1758.57,965.44 L1759.20,965.03Z M1765.90,970.40 A3.6,3.6 0 1 0 1758.70,970.40 A3.6,3.6 0 1 0 1765.90,970.40Z" fill="#111827" fill-rule="evenodd"/><path d="M1676.87,1031.70 L1677.29,1028.83 L1681.31,1028.83 L1681.73,1031.70 L1682.40,1032.03 L1683.03,1032.44 L1685.72,1031.38 L1687.72,1034.85 L1685.45,1036.65 L1685.50,1037.40 L1685.45,1038.15 L1687.72,1039.95 L1685.72,1043.42 L1683.03,1042.36 L1682.40,1042.77 L1681.73,1043.10 L1681.31,1045.97 L1677.29,1045.97 L1676.87,1043.10 L1676.20,1042.77 L1675.57,1042.36 L1672.88,1043.42 L1670.88,1039.95 L1673.15,1038.15 L1673.10,1037.40 L1673.15,1036.65 L1670.88,1034.85 L1672.88,1031.38 L1675.57,1032.44 L1676.20,1032.03Z M1682.90,1037.40 A3.6,3.6 0 1 0 1675.70,1037.40 A3.6,3.6 0 1 0 1682.90,1037.40Z" fill="#111827" fill-rule="evenodd"/><path d="M1626.97,1098.70 L1627.39,1095.83 L1631.41,1095.83 L1631.83,1098.70 L1632.50,1099.03 L1633.13,1099.44 L1635.82,1098.38 L1637.82,1101.85 L1635.55,1103.65 L1635.60,1104.40 L1635.55,1105.15 L1637.82,1106.95 L1635.82,1110.42 L1633.13,1109.36 L1632.50,1109.77 L1631.83,1110.10 L1631.41,1112.97 L1627.39,1112.97 L1626.97,1110.10 L1626.30,1109.77 L1625.67,1109.36 L1622.98,1110.42 L1620.98,1106.95 L1623.25,1105.15 L1623.20,1104.40 L1623.25,1103.65 L1620.98,1101.85 L1622.98,1098.38 L1625.67,1099.44 L1626.30,1099.03Z M1633.00,1104.40 A3.6,3.6 0 1 0 1625.80,1104.40 A3.6,3.6 0 1 0 1633.00,1104.40Z" fill="#111827" fill-rule="evenodd"/><path d="M1655.87,1165.70 L1656.29,1162.83 L1660.31,1162.83 L1660.73,1165.70 L1661.40,1166.03 L1662.03,1166.44 L1664.72,1165.38 L1666.72,1168.85 L1664.45,1170.65 L1664.50,1171.40 L1664.45,1172.15 L1666.72,1173.95 L1664.72,1177.42 L1662.03,1176.36 L1661.40,1176.77 L1660.73,1177.10 L1660.31,1179.97 L1656.29,1179.97 L1655.87,1177.10 L1655.20,1176.77 L1654.57,1176.36 L1651.88,1177.42 L1649.88,1173.95 L1652.15,1172.15 L1652.10,1171.40 L1652.15,1170.65 L1649.88,1168.85 L1651.88,1165.38 L1654.57,1166.44 L1655.20,1166.03Z M1661.90,1171.40 A3.6,3.6 0 1 0 1654.70,1171.40 A3.6,3.6 0 1 0 1661.90,1171.40Z" fill="#111827" fill-rule="evenodd"/><path d="M1628.87,1232.70 L1629.29,1229.83 L1633.31,1229.83 L1633.73,1232.70 L1634.40,1233.03 L1635.03,1233.44 L1637.72,1232.38 L1639.72,1235.85 L1637.45,1237.65 L1637.50,1238.40 L1637.45,1239.15 L1639.72,1240.95 L1637.72,1244.42 L1635.03,1243.36 L1634.40,1243.77 L1633.73,1244.10 L1633.31,1246.97 L1629.29,1246.97 L1628.87,1244.10 L1628.20,1243.77 L1627.57,1243.36 L1624.88,1244.42 L1622.88,1240.95 L1625.15,1239.15 L1625.10,1238.40 L1625.15,1237.65 L1622.88,1235.85 L1624.88,1232.38 L1627.57,1233.44 L1628.20,1233.03Z M1634.90,1238.40 A3.6,3.6 0 1 0 1627.70,1238.40 A3.6,3.6 0 1 0 1634.90,1238.40Z" fill="#111827" fill-rule="evenodd"/><path d="M1762.87,1299.70 L1763.29,1296.83 L1767.31,1296.83 L1767.73,1299.70 L1768.40,1300.03 L1769.03,1300.44 L1771.72,1299.38 L1773.72,1302.85 L1771.45,1304.65 L1771.50,1305.40 L1771.45,1306.15 L1773.72,1307.95 L1771.72,1311.42 L1769.03,1310.36 L1768.40,1310.77 L1767.73,1311.10 L1767.31,1313.97 L1763.29,1313.97 L1762.87,1311.10 L1762.20,1310.77 L1761.57,1310.36 L1758.88,1311.42 L1756.88,1307.95 L1759.15,1306.15 L1759.10,1305.40 L1759.15,1304.65 L1756.88,1302.85 L1758.88,1299.38 L1761.57,1300.44 L1762.20,1300.03Z M1768.90,1305.40 A3.6,3.6 0 1 0 1761.70,1305.40 A3.6,3.6 0 1 0 1768.90,1305.40Z" fill="#111827" fill-rule="evenodd"/><path d="M1794.07,1366.70 L1794.49,1363.83 L1798.51,1363.83 L1798.93,1366.70 L1799.60,1367.03 L1800.23,1367.44 L1802.92,1366.38 L1804.92,1369.85 L1802.65,1371.65 L1802.70,1372.40 L1802.65,1373.15 L1804.92,1374.95 L1802.92,1378.42 L1800.23,1377.36 L1799.60,1377.77 L1798.93,1378.10 L1798.51,1380.97 L1794.49,1380.97 L1794.07,1378.10 L1793.40,1377.77 L1792.77,1377.36 L1790.08,1378.42 L1788.08,1374.95 L1790.35,1373.15 L1790.30,1372.40 L1790.35,1371.65 L1788.08,1369.85 L1790.08,1366.38 L1792.77,1367.44 L1793.40,1367.03Z M1800.10,1372.40 A3.6,3.6 0 1 0 1792.90,1372.40 A3.6,3.6 0 1 0 1800.10,1372.40Z" fill="#111827" fill-rule="evenodd"/></svg>
</div></div>
<svg style="position:absolute;left:0;top:0;overflow:visible" width="2860" height="1392" viewBox="0 0 2860 1392"><g fill="none" stroke="#dc2626" stroke-width="5.6" stroke-linecap="round" stroke-linejoin="round" style="filter:drop-shadow(0 1px 1px rgba(0,0,0,0.18))"><path d="M1787,765.9 H1738"/><path d="M1749.2,754.2 L1737.2,765.9 L1749.2,777.6"/></g></svg>
</div></div>
<div style="position:absolute;left:1347.00px;top:101.00px;width:8.00px;height:1291.00px;box-sizing:border-box;background:#f4f4f5;"></div>
<div style="position:absolute;left:1301.00px;top:49.00px;width:54.00px;height:51.00px;box-sizing:border-box;background:#e0e7ff;border-radius:12px 0 0 12px;box-shadow:-3px 7px 12px rgba(0,0,0,0.09);"></div>
<svg style="position:absolute;left:0;top:0;overflow:visible" width="2860" height="1392" viewBox="0 0 2860 1392"><path d="M1321.2,67.3 L1334.8,80.8 M1334.8,67.3 L1321.2,80.8" stroke="#4b5563" stroke-width="1.9"/></svg>
<div style="position:absolute;left:1347.10px;top:671.10px;width:7.60px;height:47.40px;box-sizing:border-box;background:#e5e7eb;border-radius:4px;"></div>
<div style="position:absolute;left:1349.20px;top:677.00px;width:1.00px;height:36.00px;box-sizing:border-box;background:#fff;"></div>
<div style="position:absolute;left:1351.90px;top:677.00px;width:1.00px;height:36.00px;box-sizing:border-box;background:#fff;"></div>
<div style="position:absolute;left:0;top:0;width:112px;height:1392px;background:#372f9c;"></div>
<svg style="position:absolute;left:0;top:0;overflow:visible" width="2860" height="1392" viewBox="0 0 2860 1392"><rect x="33" y="53" width="36" height="6" rx="3" fill="#fff"/><rect x="33" y="65" width="36" height="6" rx="3" fill="#fff"/><rect x="33" y="77" width="36" height="6" rx="3" fill="#fff"/><path d="M33.2,168.7 L44.6,180.1 L68.4,157.3 L62.2,151.1 L44.6,168.2 L39.4,162.6 Z" fill="#a5b4fc"/><circle cx="50.4" cy="248.5" r="16.8" fill="none" stroke="#fff" stroke-width="3.8"/><path d="M46.6,241 L58,249 L46.6,257 Z" fill="#fff"/><g fill="#a5b4fc"><rect x="31.5" y="321" width="22.8" height="3.4"/><rect x="31.5" y="329" width="22.8" height="3.4"/><rect x="31.5" y="336.4" width="15.2" height="3.4"/></g><path d="M50.5,338 L58,345.5 L70.5,333" fill="none" stroke="#a5b4fc" stroke-width="3.6"/><path d="M33.4,431.3 V425.9 H40.9 V418.3 H48.5 V410.9 H56.1 V403.2 H69 V408.7 H61.9 V416.3 H54.1 V423.9 H46.7 V431.3 Z" fill="#a5b4fc"/><path d="M33,504 H42.5 L46.5,489 L51.5,512 L56.5,499.5 L60,504 H67" fill="none" stroke="#a5b4fc" stroke-width="3.4" stroke-linejoin="miter"/><path d="M31.7,580.8 V569 Q31.7,565.5 35,565.5 H66 Q69.1,565.5 69.1,569 V600 Q69.1,603.1 66,603.1 H35 Q31.7,603.1 31.7,600 V591.8" fill="none" stroke="#a5b4fc" stroke-width="3.8"/><rect x="31" y="566" width="38.5" height="7.5" fill="#a5b4fc"/><rect x="29.8" y="584.7" width="23.5" height="3.4" fill="#a5b4fc"/><path d="M43.7,579.4 L50.6,586.3 L43.7,593.2" fill="none" stroke="#a5b4fc" stroke-width="3.8"/><rect x="35.4" y="653.2" width="30.2" height="30.2" rx="2.5" fill="none" stroke="#a5b4fc" stroke-width="3.6"/><g fill="#a5b4fc"><rect x="40.8" y="664.5" width="3.8" height="13.2"/><rect x="48" y="658.7" width="3.8" height="19"/><rect x="55.6" y="670" width="4" height="7.7"/></g><g fill="none" stroke="#a5b4fc" stroke-width="3"><circle cx="39.4" cy="739" r="4.2"/><circle cx="61.8" cy="739" r="4.2"/><circle cx="50.4" cy="765.4" r="4.2"/><path d="M41.6,742.8 Q45,753 49.6,761.2 M59.6,742.8 Q56,753 51.2,761.2"/></g><path d="M45.00,823.47 L44.87,818.74 L55.93,818.74 L55.80,823.47 L57.50,824.30 L59.07,825.36 L63.11,822.88 L68.63,832.45 L64.47,834.71 L64.60,836.60 L64.47,838.49 L68.63,840.75 L63.11,850.32 L59.07,847.84 L57.50,848.90 L55.80,849.73 L55.93,854.46 L44.87,854.46 L45.00,849.73 L43.30,848.90 L41.73,847.84 L37.69,850.32 L32.17,840.75 L36.33,838.49 L36.20,836.60 L36.33,834.71 L32.17,832.45 L37.69,822.88 L41.73,825.36 L43.30,824.30Z M56.70,836.60 A6.3,6.3 0 1 0 44.10,836.60 A6.3,6.3 0 1 0 56.70,836.60Z" fill="#a5b4fc" fill-rule="evenodd"/><circle cx="50.6" cy="1154.3" r="16.8" fill="none" stroke="#a5b4fc" stroke-width="3.6"/><path d="M45,1151.2 Q45,1145.4 50.4,1145.4 Q55.9,1145.4 55.9,1150.3 Q55.9,1152.8 53.2,1154.7 Q50.4,1156.6 50.4,1159.8" fill="none" stroke="#a5b4fc" stroke-width="3.7"/><rect x="48.3" y="1162.7" width="4.2" height="3.3" fill="#a5b4fc"/><path d="M29.7,1227 V1255.5 H65" fill="none" stroke="#a5b4fc" stroke-width="3.4"/><path d="M38,1220 H47.5 L51,1223 H70.5 Q73.4,1223 73.4,1226 V1247 Q73.4,1249.5 70.5,1249.5 H38 Q35.5,1249.5 35.5,1247 V1222.5 Q35.5,1220 38,1220 Z" fill="#a5b4fc"/><circle cx="51.7" cy="1321.8" r="22.3" fill="#fff" stroke="#1a1a1a" stroke-width="3"/><path d="M39.5,1309.5 H56.5 V1335.5 H49 V1316 H39.5 Z" fill="#1a1a1a"/><rect x="58.5" y="1309.5" width="2.2" height="12" fill="#4f7cff"/><rect x="62.5" y="1309.5" width="1.6" height="6" fill="#1a1a1a"/></svg>
<div style="position:absolute;left:112.00px;top:2.00px;width:1.00px;height:1390.00px;box-sizing:border-box;background:#fff;"></div>
<div style="position:absolute;left:70px;top:251px;width:40px;height:40px;border-radius:50%;background:#dc1f1f;"></div>
<svg style="position:absolute;left:0;top:0;overflow:visible" width="2860" height="1392" viewBox="0 0 2860 1392"><path d="M89.8,280.8 H94.2 V260.7 H90.3 L84.7,264.4 V268.3 L89.8,265.3 Z" fill="#fff"/></svg>
<div style="position:absolute;left:112.00px;top:1300.00px;width:2748.00px;height:86.00px;box-sizing:border-box;background:linear-gradient(to bottom,rgba(0,0,0,0) 0%,rgba(0,0,0,0.018) 40%,rgba(0,0,0,0.095) 100%);-webkit-mask-image:linear-gradient(to right,rgba(0,0,0,0.45) 0%,#000 300px,#000 calc(100% - 300px),transparent calc(100% - 40px));"></div>
<div style="position:absolute;left:0.00px;top:1386.00px;width:112.00px;height:2.00px;box-sizing:border-box;background:#d3d0f0;"></div>
<div style="position:absolute;left:112.00px;top:1386.00px;width:2748.00px;height:2.00px;box-sizing:border-box;background:#fff;"></div>
</div></div><div style="position:absolute;left:0;top:0;width:2860px;height:1px;background:#202125;"></div></body></html>
